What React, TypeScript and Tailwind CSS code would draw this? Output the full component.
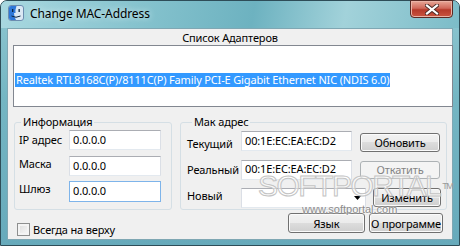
const btn =
  "h-[19px] border border-[#707070] rounded-[3px] bg-[linear-gradient(to_bottom,#f2f2f2_0%,#ebebeb_50%,#dddddd_50%,#cfcfcf_100%)] shadow-[inset_0_0_0_1px_#fbfbfb] flex items-center justify-center leading-none whitespace-nowrap";

const input =
  "h-[20px] bg-white border border-[#abadb3] border-x-[#dbdfe6] border-b-[#e3e9ef] pl-[3px] flex items-center whitespace-nowrap";

function FinderIcon() {
  return (
    <svg width="16" height="16" viewBox="0 0 16 16" className="mt-[4px] ml-[7px] shrink-0">
      <rect x="0.5" y="0.5" width="15" height="15" rx="2.5" fill="#dbe8f4" stroke="#6c8db0" />
      <path d="M1 3 Q1 1 3 1 H8.5 Q7 5 7.5 8 H6 Q6 12 8 15 H3 Q1 15 1 13 Z" fill="#2f78d8" />
      <rect x="4" y="4" width="1.3" height="3" fill="#0d2440" />
      <rect x="10.5" y="4" width="1.3" height="3" fill="#0d2440" />
      <path d="M3.5 11 Q8 13.5 12.5 11" stroke="#0d2440" strokeWidth="1" fill="none" />
    </svg>
  );
}

function CloseButton() {
  return (
    <div className="ml-auto mr-[6px] w-[43px] h-[18px] -mt-[1px] rounded-b-[4px] border border-[#5a2a24] bg-[linear-gradient(to_bottom,#e8a898_0%,#d0685a_45%,#b63a2a_55%,#c9543f_100%)] shadow-[inset_0_0_0_1px_#eab3a6] flex items-center justify-center">
      <svg width="14" height="11" viewBox="0 0 14 11">
        <path d="M2 1.5 L12 9.5 M12 1.5 L2 9.5" stroke="#4a2a26" strokeWidth="4" strokeLinecap="square" />
        <path d="M2 1.5 L12 9.5 M12 1.5 L2 9.5" stroke="#ffffff" strokeWidth="2.2" strokeLinecap="square" />
      </svg>
    </div>
  );
}

export default function App() {
  return (
    <div className="relative w-[460px] h-[246px] overflow-hidden bg-white font-['Noto_Sans',sans-serif] text-black">
      <div className="w-[460px] h-[246px] flex flex-col rounded-t-[7px] border border-[#2e4d58] bg-[linear-gradient(to_bottom,#8fc7d1_0%,#74b6c3_40%,#67aabb_100%)]">
        {/* title bar */}
        <div className="h-[27px] flex items-start shrink-0 bg-[linear-gradient(100deg,#a9d8e0_0%,#86c3ce_30%,#6db2c0_55%,#a2d2da_75%,#7cbcc8_100%)] rounded-t-[6px]">
          <FinderIcon />
          <span className="ml-[6px] mt-[5px] text-[12px] tracking-[-0.1px] leading-[16px] [text-shadow:0_0_6px_#e6f5f8]">
            Change MAC-Address
          </span>
          <CloseButton />
        </div>

        {/* client */}
        <div className="mx-[6px] h-[212px] bg-[#f0f0f0] border border-[#7fa7b3] flex flex-col text-[11px] tracking-[-0.15px]">
          <div className="h-[16px] flex items-center justify-center leading-none">Список Адаптеров</div>
          <div className="ml-[5px] w-[440px] h-[62px] bg-white border border-[#828790] pt-[26px] pl-[1px]">
            <div className="inline-flex h-[14px] items-center bg-[#3399ff] text-white pl-[1px] pr-[1px] leading-none whitespace-nowrap">
              Realtek RTL8168C(P)/8111C(P) Family PCI-E Gigabit Ethernet NIC (NDIS 6.0)
            </div>
          </div>

          <div className="flex mt-[8px]">
            <fieldset className="ml-[6px] w-[158px] h-[95px] border border-[#d5dfe5] rounded-[3px] pl-[4px]">
              <legend className="ml-[2px] px-[2px] leading-[14px]">Информация</legend>
              <div className="flex items-center mt-[1px]">
                <span className="w-[50px] whitespace-nowrap">IP адрес</span>
                <div className={`${input} w-[92px]`}>0.0.0.0</div>
              </div>
              <div className="flex items-center mt-[6px]">
                <span className="w-[50px] -mt-[3px]">Маска</span>
                <div className={`${input} w-[92px]`}>0.0.0.0</div>
              </div>
              <div className="flex items-center mt-[5px]">
                <span className="w-[50px] -mt-[4px]">Шлюз</span>
                <div className="h-[21px] w-[92px] bg-white border border-[#7eb4ea] pl-[3px] flex items-center">
                  0.0.0.0
                </div>
              </div>
            </fieldset>

            <fieldset className="ml-[8px] w-[267px] h-[95px] border border-[#d5dfe5] rounded-[3px] pl-[6px]">
              <legend className="ml-[5px] px-[2px] leading-[14px]">Мак адрес</legend>
              <div className="flex items-center">
                <span className="w-[54px] mt-[7px]">Текущий</span>
                <div className={`${input} w-[111px] h-[19px]`}>00:1E:EC:EA:EC:D2</div>
                <div className={`${btn} ml-[8px] w-[80px] mt-[4px]`}>Обновить</div>
              </div>
              <div className="flex items-center mt-[7px]">
                <span className="w-[54px] mt-[2px]">Реальный</span>
                <div className={`${input} w-[111px] h-[19px]`}>00:1E:EC:EA:EC:D2</div>
                <div className="ml-[8px] w-[80px] h-[18px] border border-[#adb2b5] rounded-[3px] bg-[#f4f4f4] text-[#838383] flex items-center justify-center leading-none">
                  Откатить
                </div>
              </div>
              <div className="flex items-center mt-[8px]">
                <span className="w-[54px] -mt-[2px]">Новый</span>
                <div className={`${input} w-[125px] h-[19px] justify-end pr-[4px]`}>
                  <svg width="7" height="4" viewBox="0 0 7 4">
                    <path d="M0 0 H7 L3.5 4 Z" fill="#000" />
                  </svg>
                </div>
                <div className={`${btn} ml-[7px] w-[68px] h-[17px]`}>Изменить</div>
              </div>
            </fieldset>
          </div>

          <div className="flex items-start mt-[3px]">
            <div className="ml-[9px] mt-[10px] flex items-center">
              <div className="w-[13px] h-[13px] border border-[#8e8f8f] bg-[linear-gradient(135deg,#dcdcdc,#fafafa)] shadow-[inset_0_0_0_2px_#f4f4f4]" />
              <span className="ml-[3px] leading-none whitespace-nowrap">Всегда на верху</span>
            </div>
            <div className={`${btn} ml-auto w-[77px] h-[20px]`}>Язык</div>
            <div className={`${btn} ml-[4px] mr-[9px] w-[74px] h-[20px]`}>О программе</div>
          </div>
        </div>
      </div>

      {/* watermark */}
      <div className="absolute left-[258px] top-[170px] text-[30px] font-['Liberation_Sans',sans-serif] tracking-[-1.5px] leading-[32px] text-white/50 [-webkit-text-stroke:1px_#c4c4c4] pointer-events-none whitespace-nowrap">
        SOFTPORTAL<span className="text-[9px] align-top ml-[2px] [-webkit-text-stroke:0px] text-[#9a9a9a]">TM</span>
      </div>
      <div className="absolute left-[302px] top-[202px] text-[11px] leading-[14px] font-['Liberation_Sans',sans-serif] text-[#8b8b8b] [text-shadow:0_0_2px_#fff,0_0_2px_#fff] pointer-events-none">
        www.softportal.com
      </div>
    </div>
  );
}
